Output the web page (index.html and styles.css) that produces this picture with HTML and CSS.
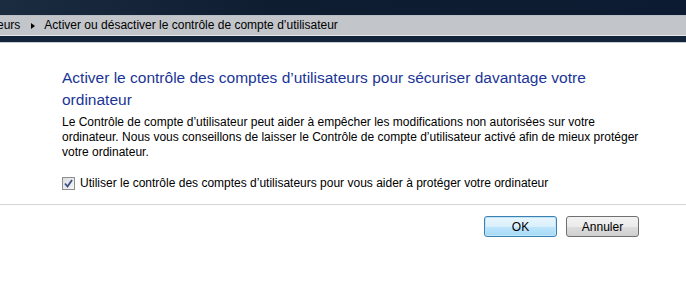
FILE: index.html
```html
<!DOCTYPE html>
<html lang="fr">

<head>
    <meta charset="UTF-8">
    <meta name="viewport" content="width=device-width, initial-scale=1.0">
    <title>Contrôle de compte d'utilisateur</title>
    <link rel="stylesheet" href="styles.css">
</head>

<body>
    <!-- haut de la fenêtre (verre aero) -->
    <div class="glass-top"></div>

    <!-- barre d'adresse -->
    <div class="address-bar">
        <span class="crumb crumb-cut">eurs</span>
        <span class="crumb-arrow"></span>
        <span class="crumb">Activer ou désactiver le contrôle de compte d’utilisateur</span>
    </div>
    <div class="glass-bottom"></div>

    <div class="content">
        <h1 class="main-title">Activer le contrôle des comptes d’utilisateurs pour sécuriser davantage votre<br>ordinateur</h1>
        <p class="desc">Le Contrôle de compte d’utilisateur peut aider à empêcher les modifications non autorisées sur votre<br>ordinateur. Nous vous conseillons de laisser le Contrôle de compte d’utilisateur activé afin de mieux protéger<br>votre ordinateur.</p>

        <label class="check">
            <span class="check-box">
                <svg width="9" height="9" viewBox="0 0 9 9">
                    <path d="M1 4.5 L3.5 7.5 L8 1" fill="none" stroke="#3b4f8c" stroke-width="1.8" />
                </svg>
            </span>
            Utiliser le contrôle des comptes d’utilisateurs pour vous aider à protéger votre ordinateur
        </label>
    </div>

    <div class="footer">
        <button type="button" class="btn btn-default">OK</button>
        <button type="button" class="btn">Annuler</button>
    </div>
</body>

</html>
```

FILE: styles.css
```css
html,
body {
    margin: 0;
    padding: 0;
    background: #fff;
    font-family: "Segoe UI", "Liberation Sans", Arial, sans-serif;
    font-size: 12px;
    color: #000;
}

/* haut sombre */
.glass-top {
    height: 15px;
    background: linear-gradient(90deg, #1b2b40 0%, #0f1d31 40%, #0c1b31 100%);
    border-bottom: 1px solid #b9bec6;
}

/* barre d'adresse */
.address-bar {
    height: 19px;
    background: #c2c5ca;
    border-bottom: 1px solid #e6e8ea;
    display: flex;
    align-items: center;
    white-space: nowrap;
    overflow: hidden;
}

.crumb {
    line-height: 19px;
}

.crumb-cut {
    margin-left: -3px;
}

.crumb-arrow {
    width: 0;
    height: 0;
    margin: 0 9px 0 11px;
    border-left: 4px solid #000;
    border-top: 3.5px solid transparent;
    border-bottom: 3.5px solid transparent;
}

.glass-bottom {
    height: 6px;
    background: #13233a;
    border-bottom: 1px solid #c8ccd2;
}

/* contenu */
.content {
    padding: 0 0 0 62px;
}

.main-title {
    margin: 24px 0 0;
    font-size: 15.5px;
    font-weight: normal;
    line-height: 22px;
    color: #1a3596;
}

.desc {
    margin: 4px 0 0;
    line-height: 15px;
    white-space: nowrap;
}

.check {
    display: flex;
    align-items: center;
    gap: 5px;
    margin-top: 16px;
    white-space: nowrap;
}

.check-box {
    box-sizing: border-box;
    width: 13px;
    height: 13px;
    border: 1px solid #8e8f8f;
    background: linear-gradient(135deg, #dcdcdc, #f6f6f6);
    display: flex;
    align-items: center;
    justify-content: center;
}

/* boutons */
.footer {
    margin-top: 14px;
    border-top: 1px solid #d5d5d5;
    display: flex;
    justify-content: flex-end;
    gap: 9px;
    padding: 11px 47px 0 0;
}

.btn {
    width: 73px;
    height: 21px;
    border: 1px solid #707070;
    border-radius: 3px;
    background: linear-gradient(#f2f2f2 0%, #ebebeb 50%, #dddddd 51%, #cfcfcf 100%);
    font-family: inherit;
    font-size: 12px;
    color: #000;
    padding: 0;
    cursor: pointer;
}

.btn-default {
    border-color: #3c7fb1;
    background: linear-gradient(#eaf6fd 0%, #d9f0fc 50%, #bee6fd 51%, #a7d9f5 100%);
    box-shadow: inset 0 0 0 1px #bfe5f8;
}
```
